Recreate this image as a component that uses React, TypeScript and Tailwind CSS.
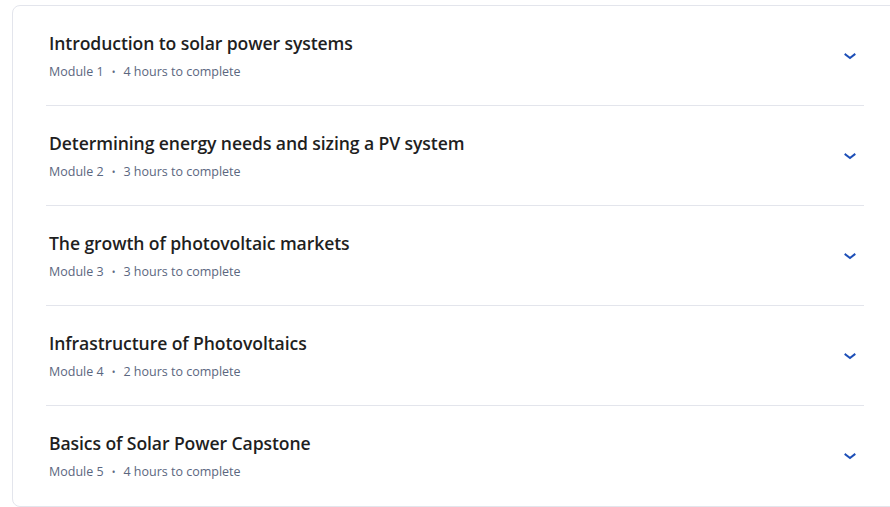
const modules = [
  { title: 'Introduction to solar power systems', n: 1, hours: 4 },
  { title: 'Determining energy needs and sizing a PV system', n: 2, hours: 3 },
  { title: 'The growth of photovoltaic markets', n: 3, hours: 3 },
  { title: 'Infrastructure of Photovoltaics', n: 4, hours: 2 },
  { title: 'Basics of Solar Power Capstone', n: 5, hours: 4 },
]

function Chevron() {
  return (
    <svg width="24" height="24" viewBox="0 0 24 24" fill="none" className="text-[#1d4fb8]">
      <path d="M7.5 10.5l4.5 3.5 4.5-3.5" stroke="currentColor" strokeWidth="2" strokeLinecap="square" />
    </svg>
  )
}

export default function App() {
  return (
    <div className="w-[890px] h-[507px] overflow-hidden bg-white font-['Open_Sans',sans-serif]">
      <div className="ml-[12px] mt-[5px] w-[886px] border border-[#e3e5ec] rounded-lg px-[33px]">
        {modules.map((m, i) => (
          <div
            key={m.n}
            className={`flex items-center justify-between h-[100px] pl-[3px] pr-[2px] ${i < modules.length - 1 ? 'border-b border-[#e3e5ec]' : ''}`}
          >
            <div className="flex flex-col gap-[6px]">
              <h3 className="text-[17.6px] leading-[26px] font-semibold text-[#1f1f1f] tracking-[-0.1px]">{m.title}</h3>
              <p className="text-[12.5px] leading-[20px] text-[#5b6780] flex items-center">
                <span>Module {m.n}</span>
                <span className="mx-[8px] text-[10px]">•</span>
                <span>{m.hours} hours to complete</span>
              </p>
            </div>
            <Chevron />
          </div>
        ))}
      </div>
    </div>
  )
}
